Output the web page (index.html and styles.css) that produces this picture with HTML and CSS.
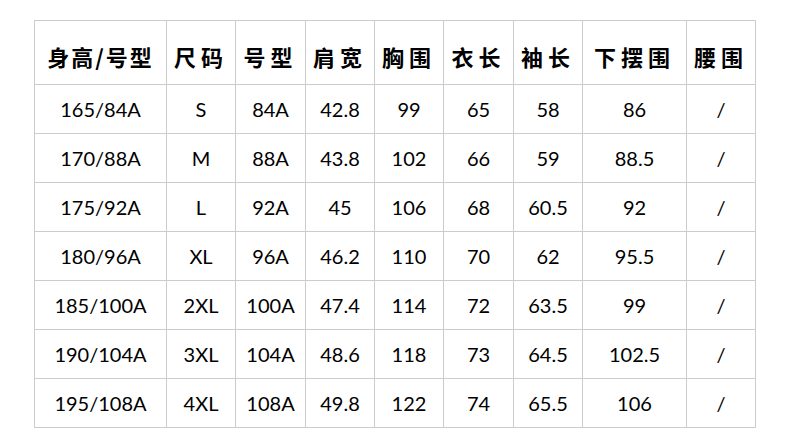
FILE: index.html
```html
<!DOCTYPE html>
<html lang="zh">
<head>
<meta charset="utf-8">
<title>尺码表</title>
<link rel="stylesheet" href="styles.css">
</head>
<body>
<div class="size-table" role="table">
  <div class="cell head head-wide">身高/号型</div>
  <div class="cell head">尺码</div>
  <div class="cell head">号型</div>
  <div class="cell head">肩宽</div>
  <div class="cell head">胸围</div>
  <div class="cell head">衣长</div>
  <div class="cell head">袖长</div>
  <div class="cell head">下摆围</div>
  <div class="cell head">腰围</div>

  <div class="cell">165/84A</div><div class="cell">S</div><div class="cell">84A</div><div class="cell">42.8</div><div class="cell">99</div><div class="cell">65</div><div class="cell">58</div><div class="cell">86</div><div class="cell">/</div>
  <div class="cell">170/88A</div><div class="cell">M</div><div class="cell">88A</div><div class="cell">43.8</div><div class="cell">102</div><div class="cell">66</div><div class="cell">59</div><div class="cell">88.5</div><div class="cell">/</div>
  <div class="cell">175/92A</div><div class="cell">L</div><div class="cell">92A</div><div class="cell">45</div><div class="cell">106</div><div class="cell">68</div><div class="cell">60.5</div><div class="cell">92</div><div class="cell">/</div>
  <div class="cell">180/96A</div><div class="cell">XL</div><div class="cell">96A</div><div class="cell">46.2</div><div class="cell">110</div><div class="cell">70</div><div class="cell">62</div><div class="cell">95.5</div><div class="cell">/</div>
  <div class="cell">185/100A</div><div class="cell">2XL</div><div class="cell">100A</div><div class="cell">47.4</div><div class="cell">114</div><div class="cell">72</div><div class="cell">63.5</div><div class="cell">99</div><div class="cell">/</div>
  <div class="cell">190/104A</div><div class="cell">3XL</div><div class="cell">104A</div><div class="cell">48.6</div><div class="cell">118</div><div class="cell">73</div><div class="cell">64.5</div><div class="cell">102.5</div><div class="cell">/</div>
  <div class="cell">195/108A</div><div class="cell">4XL</div><div class="cell">108A</div><div class="cell">49.8</div><div class="cell">122</div><div class="cell">74</div><div class="cell">65.5</div><div class="cell">106</div><div class="cell">/</div>
</div>
</body>
</html>
```
FILE: styles.css
```css
html, body {
  margin: 0;
  padding: 0;
  background: #ffffff;
}

body {
  padding: 20px 0 0 34px;
  height: 428px;
  box-sizing: border-box;
  overflow: hidden;
}

.size-table {
  display: grid;
  grid-template-columns: 131px 68px 69px 68px 68px 69px 68px 103px 68px;
  grid-template-rows: 63px repeat(7, 48px);
  gap: 1px;
  width: 722px;
  box-sizing: border-box;
  border: 1px solid #cccccc;
  background: #cccccc;
}

.cell {
  background: #ffffff;
  display: flex;
  align-items: center;
  justify-content: center;
  font-family: "Lato", "Noto Sans CJK SC", sans-serif;
  font-size: 20px;
  color: #000000;
  line-height: 1;
  white-space: nowrap;
}

.head {
  font-family: "Noto Sans CJK SC", sans-serif;
  font-weight: 700;
  font-size: 22px;
  letter-spacing: 5px;
  padding-top: 6px;
  box-sizing: border-box;
}

.head-wide {
  letter-spacing: 2px;
}
```
